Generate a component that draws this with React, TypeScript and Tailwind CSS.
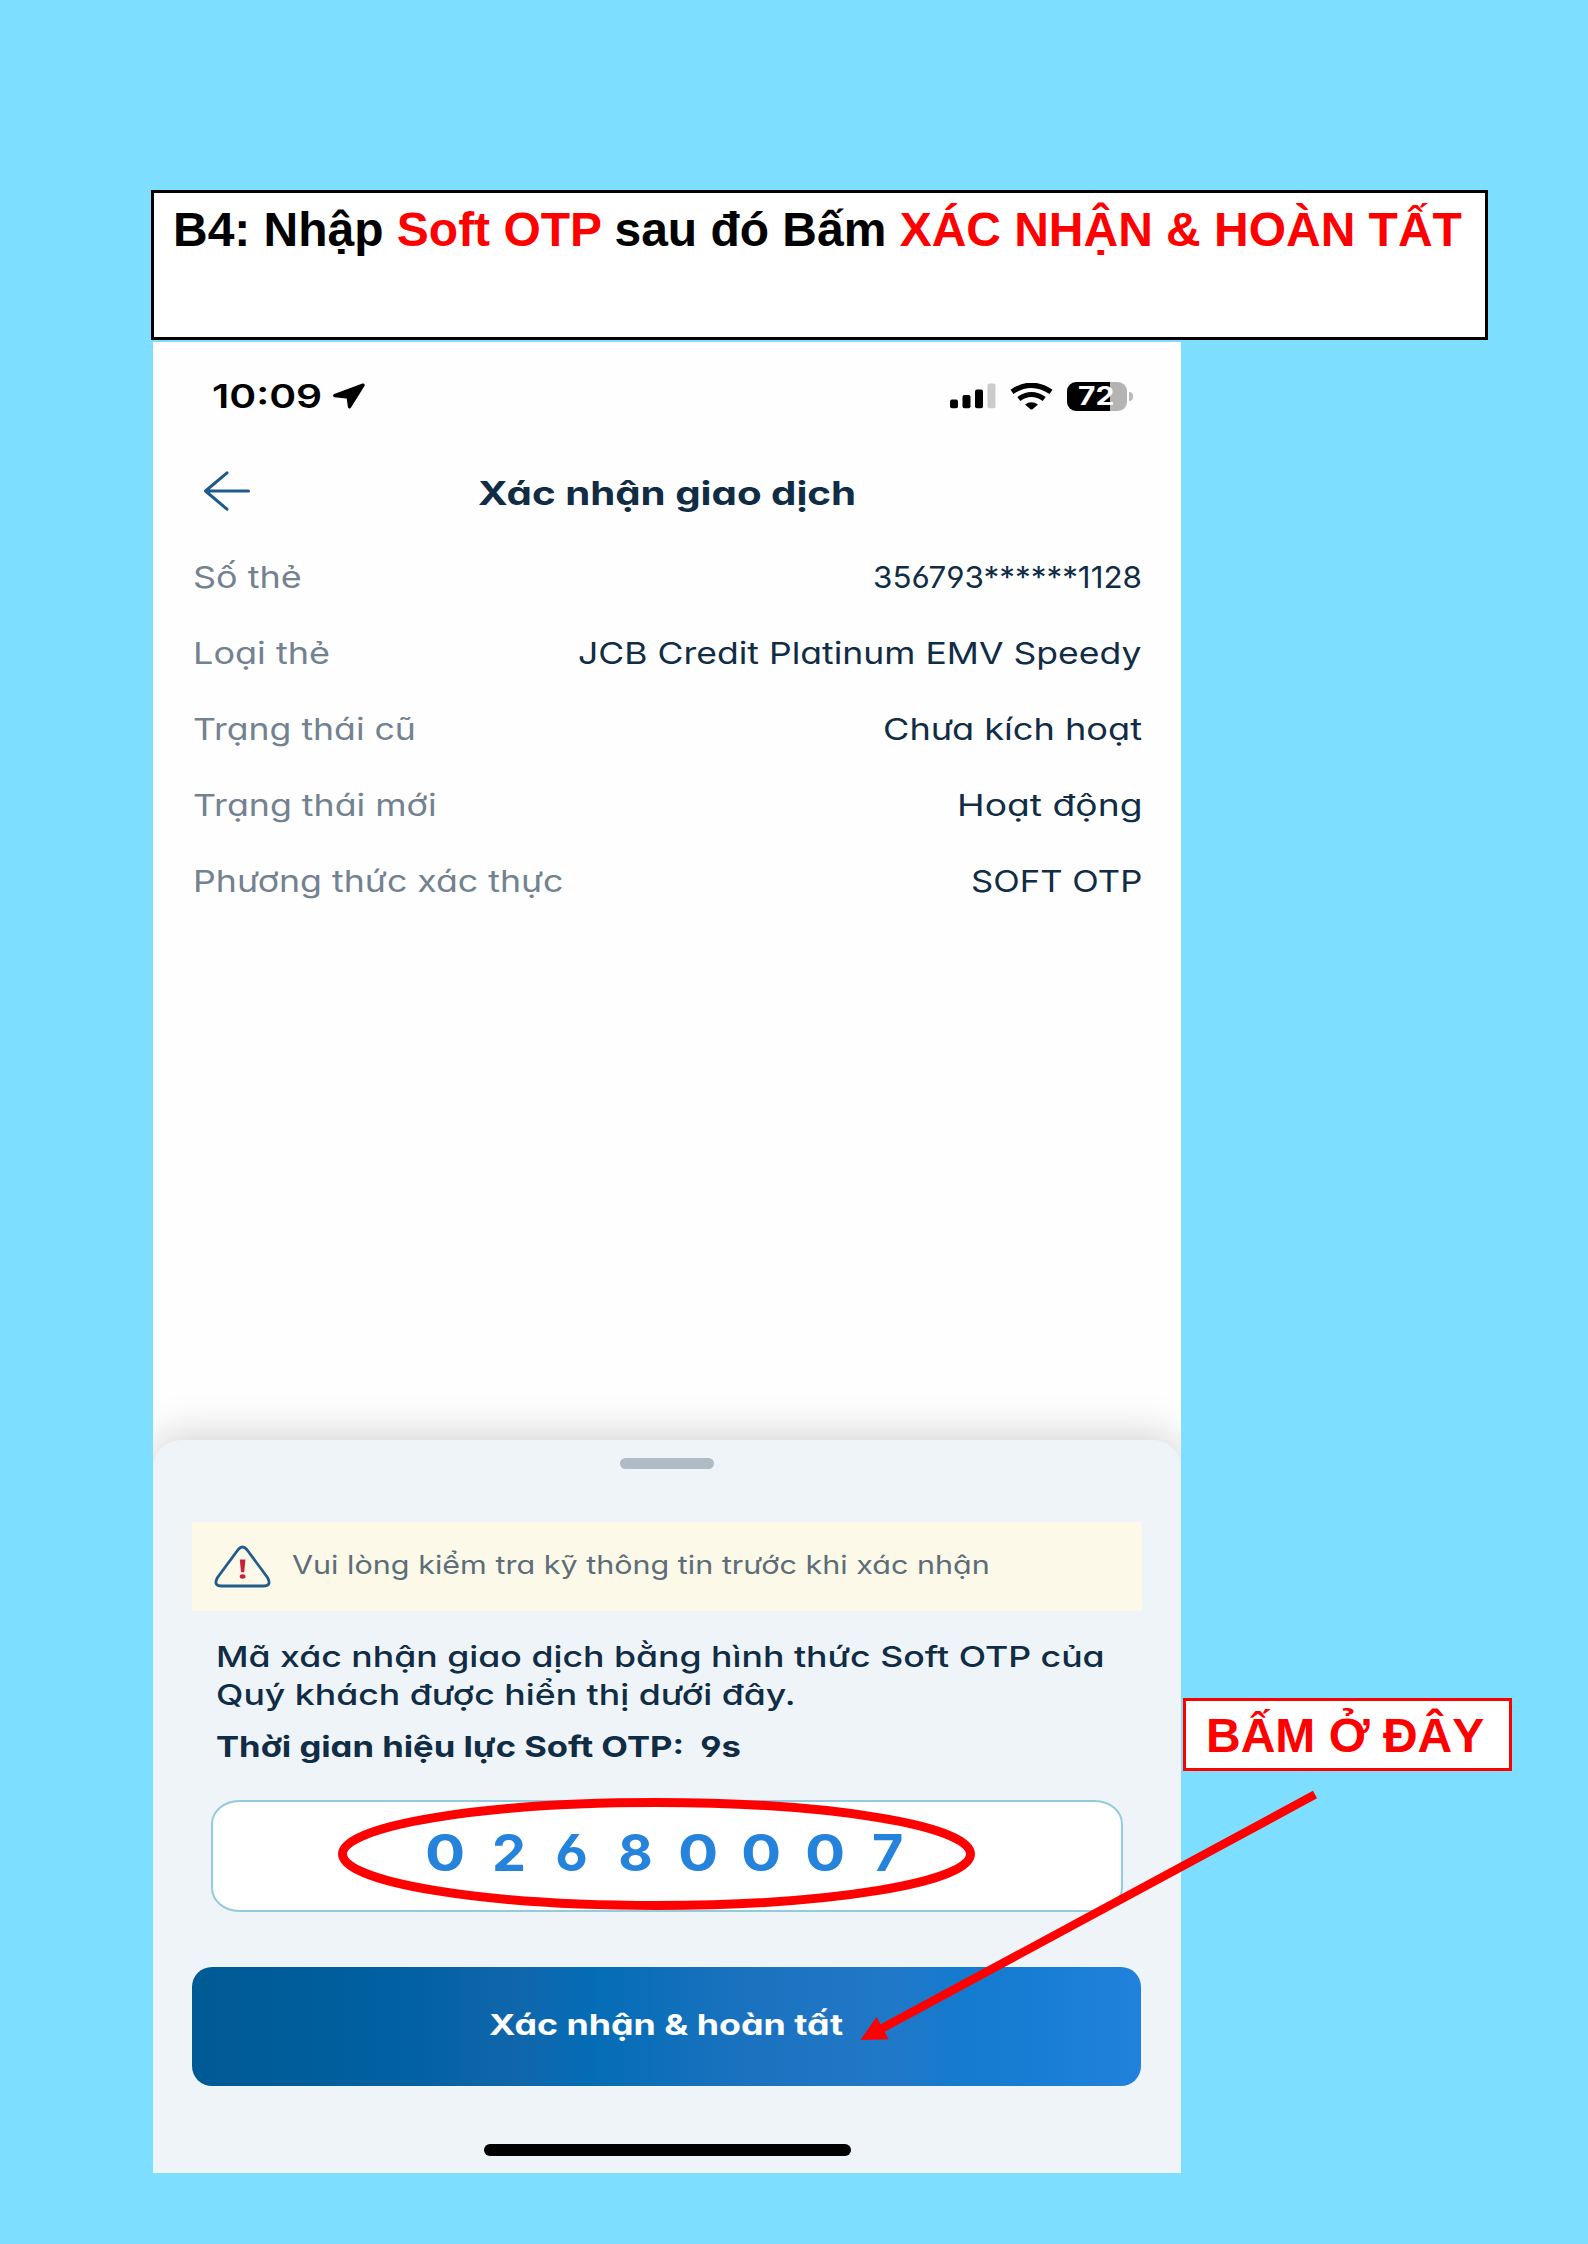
import { useLayoutEffect, useRef, useState, type ReactNode } from "react";

/* Single line of text stretched horizontally to an exact width. */
function Stretch({ width, className = "", children }: { width: number; className?: string; children: ReactNode }) {
  const ref = useRef<HTMLSpanElement>(null);
  const [scale, setScale] = useState(1);
  useLayoutEffect(() => {
    const fit = () => {
      if (ref.current) setScale(width / ref.current.offsetWidth);
    };
    fit();
    document.fonts?.ready.then(fit);
  }, [width]);
  return (
    <span className={`block shrink-0 whitespace-pre ${className}`} style={{ width }}>
      <span ref={ref} className="inline-block origin-left" style={{ transform: `scaleX(${scale})` }}>
        {children}
      </span>
    </span>
  );
}

const rows = [
  { label: "Số thẻ", lw: 109, value: "356793******1128", vw: 269 },
  { label: "Loại thẻ", lw: 137, value: "JCB Credit Platinum EMV Speedy", vw: 564 },
  { label: "Trạng thái cũ", lw: 223, value: "Chưa kích hoạt", vw: 259 },
  { label: "Trạng thái mới", lw: 243, value: "Hoạt động", vw: 185 },
  { label: "Phương thức xác thực", lw: 371, value: "SOFT OTP", vw: 171 },
];

const digitWidth: Record<string, string> = {
  "0": "scale-x-[1.170]",
  "2": "scale-x-[1.060]",
  "6": "scale-x-[1.040]",
  "7": "scale-x-[1.060]",
  "8": "scale-x-[1.040]",
};

function StatusBar() {
  return (
    <div className="mt-6 flex h-[60px] items-center pl-[59px] pr-[48px] text-black">
      <Stretch width={110} className="text-[33px] font-semibold leading-[60px] [font-feature-settings:normal]">10:09</Stretch>
      <svg className="ml-[11px] h-[26px] w-[32px]" viewBox="0 0 32 26">
        <path d="M1.800 12.500L30 2.200L16.600 23.700L15.200 14Z" fill="#000" stroke="#000" strokeWidth="3.400" strokeLinejoin="round" />
      </svg>
      <svg className="ml-auto h-[26px] w-[46px]" viewBox="0 0 46 26">
        <rect x="0" y="16.500" width="8" height="8.800" rx="2" />
        <rect x="12.500" y="12" width="8" height="13.300" rx="2" />
        <rect x="25" y="6.500" width="8" height="18.800" rx="2" />
        <rect x="37.500" y="0.500" width="8" height="24.800" rx="2" fill="#cbcbcb" />
      </svg>
      <svg className="ml-[14px] h-[27px] w-[43px]" viewBox="0 0 43 27">
        <path d="M2 8.800Q21.500-4.300 41 8.800" fill="none" stroke="#000" strokeWidth="5.200" />
        <path d="M8.800 16Q21.500 7 34.200 16" fill="none" stroke="#000" strokeWidth="5" />
        <path d="M15 21.600Q21.500 16.700 28 21.600L22.500 26.200Q21.500 26.900 20.500 26.200Z" />
      </svg>
      <div className="ml-[14px] flex h-[29px] w-[60px] items-center overflow-hidden rounded-[9px] bg-[linear-gradient(90deg,#000_43px,#b4b4b4_43px)] pl-[11px]">
        <Stretch width={36} className="text-[25px] font-bold leading-[29px] text-white">72</Stretch>
      </div>
      <div className="ml-[2px] h-[9px] w-[4px] rounded-r-full bg-[#b9b9b9]" />
    </div>
  );
}

function Header() {
  return (
    <div className="mt-[37px] flex h-[60px] items-center pl-[50px]">
      <svg className="-mt-1 h-[40px] w-[48px]" viewBox="0 0 48 40" fill="none" stroke="#1f5a8a" strokeWidth="3" strokeLinecap="round" strokeLinejoin="round">
        <path d="M45.500 20H2.500M24 1.800L2.500 20L24 38.200" />
      </svg>
      <Stretch width={378} className="ml-[227px] text-[33px] font-bold leading-[60px] text-[#112c45]">Xác nhận giao dịch</Stretch>
    </div>
  );
}

function Sheet() {
  return (
    <div className="mt-[521px] flex h-[733px] flex-col rounded-t-[28px] bg-[#eff4f8] shadow-[0_-4px_44px_rgba(0,0,0,0.19)]">
      <div className="ml-[467px] mt-[18px] h-[11px] w-[94px] rounded-full bg-[#b1bbc6]" />

      <div className="ml-[39px] mt-[53px] flex h-[89px] w-[950px] items-center bg-[#fcf9e8] pl-[22px]">
        <svg className="h-[44px] w-[58px]" viewBox="0 0 58 44">
          <path d="M24.200 4.500Q28.500-.5 32.800 4.500L53.500 32.500Q58 41 49.500 41H7.500Q-1 41 3.500 32.500Z" fill="none" stroke="#205d8c" strokeWidth="2.800" strokeLinejoin="round" />
          <path d="M25.800 14.500h5.600l-1.200 12.800h-3.200z" fill="#c9203f" />
          <ellipse cx="28.600" cy="31.500" rx="2.900" ry="2.200" fill="#c9203f" />
        </svg>
        <Stretch width={698} className="-mt-[4px] ml-[20px] text-[25.500px] leading-[40px] text-[#5d6d79]">
          Vui lòng kiểm tra kỹ thông tin trước khi xác nhận
        </Stretch>
      </div>

      <div className="ml-[63px] mt-[27px] text-[29px] leading-[38px] text-[#112c45]">
        <Stretch width={889} className="font-medium">Mã xác nhận giao dịch bằng hình thức Soft OTP của</Stretch>
        <Stretch width={580} className="font-medium">Quý khách được hiển thị dưới đây.</Stretch>
        <Stretch width={525} className="mt-[14px] font-bold">{"Thời gian hiệu lực Soft OTP:  9s"}</Stretch>
      </div>

      <div className="relative ml-[58px] mt-[34px] flex h-[112px] w-[912px] items-center rounded-[28px/24px] border-2 border-[#93cbdd] bg-white pl-[201px]">
        {"02680007".split("").map((d, i) => (
          <span key={i} className="mb-[7px] flex w-[63.200px] justify-center text-[51px] font-bold leading-none text-[#2583dc]">
            <span className={`inline-block ${digitWidth[d]}`}>{d}</span>
          </span>
        ))}
        <svg className="absolute -top-[4px] left-[124px] h-[114px] w-[640px]" viewBox="0 0 640 114">
          <ellipse cx="319.500" cy="56" rx="314" ry="51.500" fill="none" stroke="#f00" strokeWidth="9" />
        </svg>
      </div>

      <div className="ml-[39px] mt-[55px] flex h-[119px] w-[949px] items-center rounded-[20px] bg-[linear-gradient(90deg,#005a94_0%,#0060a2_22%,#1166ab_34%,#046cb6_42%,#1a72bf_58%,#2078c8_74%,#137bd0_82%,#2181dc_100%)] pl-[297px]">
        <Stretch width={354} className="-mt-[4px] text-[29px] font-bold leading-[40px] text-white">{"Xác nhận & hoàn tất"}</Stretch>
      </div>

      <div className="ml-[331px] mt-[58px] h-[12px] w-[367px] rounded-full bg-black" />
    </div>
  );
}

export default function App() {
  return (
    <div className="relative h-[2244px] w-[1588px] overflow-hidden bg-[#7edeff] pl-[151px] pt-[190px]">
      <div className="h-[150px] w-[1337px] border-[3px] border-black bg-white pl-[19px] pt-[9px] font-['Liberation_Sans',sans-serif] text-[48px] font-bold leading-[56px] text-black">
        <Stretch width={1289}>
          B4: Nhập <span className="text-[#f00]">Soft OTP</span> sau đó Bấm <span className="text-[#f00]">{"XÁC NHẬN & HOÀN TẤT"}</span>
        </Stretch>
      </div>

      <div className="ml-[2px] mt-[2px] flex items-start">
        <div className="flow-root h-[1831px] w-[1028px] shrink-0 overflow-hidden bg-[#fefefe] font-['Inter',sans-serif] [font-feature-settings:'cv11','cv03','cv04']">
          <StatusBar />
          <Header />
          <div className="mt-4 pl-[39.500px] pr-[39px] text-[30px] leading-[77px]">
            {rows.map((r) => (
              <div key={r.label} className="flex h-[76px] justify-between">
                <Stretch width={r.lw} className="text-[#738290]">{r.label}</Stretch>
                <Stretch width={r.vw} className="text-[#112c45]">{r.value}</Stretch>
              </div>
            ))}
          </div>
          <Sheet />
        </div>

        <div className="ml-[2px] mt-[1356px] h-[73px] w-[329px] shrink-0 border-[3px] border-[#f00] bg-white pl-[20px] pt-[7px] font-['Liberation_Sans',sans-serif] text-[48px] font-bold leading-[56px] text-[#f00]">
          <Stretch width={278}>BẤM Ở ĐÂY</Stretch>
        </div>
      </div>

      <svg className="absolute left-[850px] top-[1780px] h-[270px] w-[480px]" viewBox="850 1780 480 270">
        <path d="M1315 1794.600L878 2030.500" stroke="#f00" strokeWidth="8.500" />
        <path d="M860.500 2040L876.500 2017L888.700 2039.300Z" fill="#f00" />
      </svg>
    </div>
  );
}
